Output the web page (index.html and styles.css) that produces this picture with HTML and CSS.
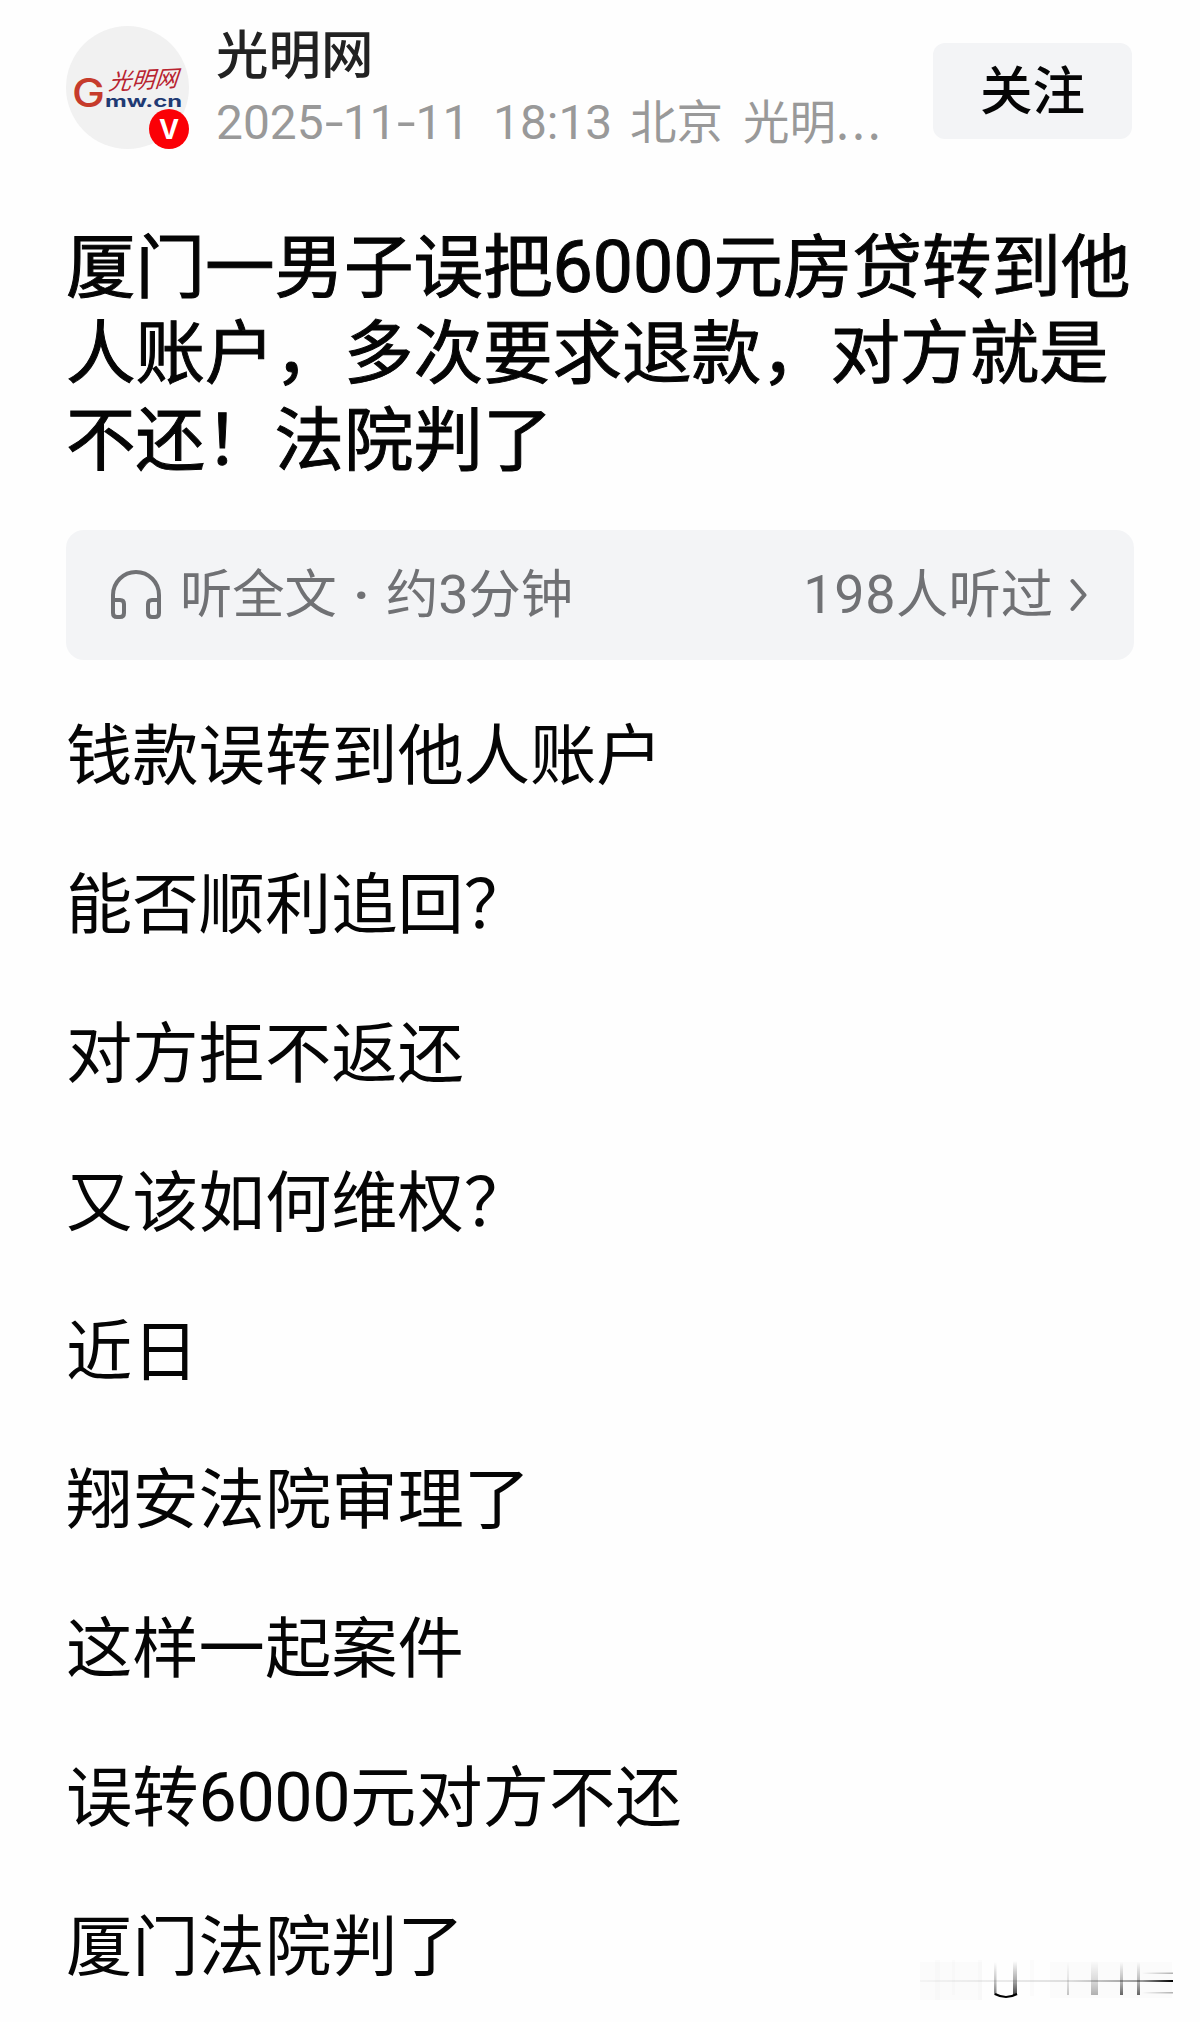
FILE: index.html
```html
<!DOCTYPE html>
<html lang="zh-CN">
<head>
  <meta charset="UTF-8">
  <title>光明网</title>
  <link rel="stylesheet" href="styles.css">
</head>
<body>
  <header class="author">
    <div class="avatar">
      <svg class="logo" viewBox="0 0 123 123">
        <text class="logo-g" x="6" y="81" textLength="33" lengthAdjust="spacingAndGlyphs">G</text>
        <text class="logo-cn" x="0" y="0" textLength="69" transform="translate(42 64) skewX(-8) rotate(-3)">光明网</text>
        <text class="logo-en" x="39" y="81" textLength="77" lengthAdjust="spacingAndGlyphs">mw.cn</text>
      </svg>
      <span class="badge">V</span>
    </div>
    <div class="info">
      <div class="name">光明网</div>
      <div class="meta"><span class="num date">2025<span class="dash">-</span>11<span class="dash">-</span>11</span><span class="num time">18:13</span><span class="city">北京</span><span>光明<span class="dots">...</span></span></div>
    </div>
    <button type="button" class="follow">关注</button>
  </header>

  <h1 class="title">厦门一男子误把<span class="num">6000</span>元房贷转到他<br>人账户，多次要求退款，对方就是<br>不还！法院判了</h1>

  <div class="listen">
    <svg class="headphone" viewBox="0 0 50 50" fill="none" stroke="#707174" stroke-width="4">
      <path d="M2 31 V25 A23 23 0 0 1 48 25 V31"/>
      <path d="M2 30 H9 Q13 30 13 34 V43 Q13 47 9 47 H6 Q2 47 2 43Z"/>
      <path d="M48 30 H41 Q37 30 37 34 V43 Q37 47 41 47 H44 Q48 47 48 43Z"/>
    </svg>
    <span class="listen-text">听全文<span class="dot">·</span>约<span class="num">3</span>分钟</span>
    <span class="listen-count"><span class="num">198</span>人听过</span>
    <svg class="arrow" viewBox="0 0 18 34" fill="none" stroke="#707174" stroke-width="4" stroke-linecap="round" stroke-linejoin="round">
      <path d="M2.500 3 L14.500 17 L2.500 31"/>
    </svg>
  </div>

  <article class="content">
    <p>钱款误转到他人账户</p>
    <p>能否顺利追回？</p>
    <p>对方拒不返还</p>
    <p>又该如何维权？</p>
    <p>近日</p>
    <p>翔安法院审理了</p>
    <p>这样一起案件</p>
    <p>误转<span class="num">6000</span>元对方不还</p>
    <p>厦门法院判了</p>
  </article>

  <!-- faded mark in the bottom corner -->
  <svg class="mark" viewBox="0 0 260 44">
    <defs>
      <linearGradient id="down" x1="0" y1="0" x2="0" y2="1">
        <stop offset="0" stop-color="#000" stop-opacity="0"/>
        <stop offset="0.6" stop-color="#000" stop-opacity="0.35"/>
        <stop offset="1" stop-color="#000" stop-opacity="0.75"/>
      </linearGradient>
      <linearGradient id="right" x1="0" y1="0" x2="1" y2="0">
        <stop offset="0" stop-color="#000" stop-opacity="0.03"/>
        <stop offset="0.6" stop-color="#000" stop-opacity="0.12"/>
        <stop offset="0.88" stop-color="#000" stop-opacity="0.4"/>
        <stop offset="1" stop-color="#000"/>
      </linearGradient>
      <linearGradient id="tail" x1="0" y1="0" x2="1" y2="0">
        <stop offset="0" stop-color="#000" stop-opacity="0"/>
        <stop offset="1" stop-color="#000" stop-opacity="0.3"/>
      </linearGradient>
    </defs>
    <g fill="#000" fill-opacity="0.01">
      <rect x="0" y="2" width="62" height="38"/>
      <rect x="15" y="0" width="5" height="40"/>
      <rect x="32" y="0" width="3" height="35"/>
      <rect x="58" y="0" width="4" height="40"/>
      <rect x="110" y="0" width="4" height="36"/>
      <rect x="130" y="2" width="122" height="36"/>
    </g>
    <g fill="url(#down)">
      <rect x="74" y="2" width="2.500" height="33" opacity="0.7"/>
      <rect x="93" y="1" width="4" height="34"/>
      <rect x="147" y="2" width="2" height="33" opacity="0.3"/>
      <rect x="171" y="1" width="7" height="34" opacity="0.4"/>
      <rect x="200" y="2" width="3" height="33" opacity="0.8"/>
      <rect x="217" y="2" width="3" height="33" opacity="0.8"/>
    </g>
    <path d="M75 34 Q86 40 97 34" fill="none" stroke="#000" stroke-width="2"/>
    <rect x="0" y="20" width="253" height="2" fill="url(#right)"/>
    <rect x="222" y="12.500" width="31" height="1.500" fill="url(#tail)"/>
    <rect x="222" y="32" width="31" height="1.500" fill="url(#tail)"/>
  </svg>
</body>
</html>
```
FILE: styles.css
```css
body {
  position: relative;
  width: 1200px;
  height: 2022px;
  margin: 0;
  padding: 26px 66px 0;
  box-sizing: border-box;
  overflow: hidden;
  background-color: #fefefe;
  color: #050505;
  font-family: "Noto Sans CJK SC", sans-serif;
}

.num {
  font-family: Roboto, "Noto Sans CJK SC", sans-serif;
  font-size: 1.03em;
  line-height: 1;
}

/* author row */
.author {
  display: flex;
  align-items: flex-start;
  height: 193px;
}

.avatar {
  position: relative;
  width: 123px;
  height: 123px;
  border-radius: 50%;
  background-color: #f1f1f1;
}

.logo {
  display: block;
  width: 123px;
  height: 123px;
}

.logo-g {
  font-family: Inter, sans-serif;
  font-size: 39px;
  font-weight: 500;
  fill: #c63b2b;
}

.logo-cn {
  font-family: "Noto Sans CJK SC", sans-serif;
  font-size: 23px;
  font-style: italic;
  fill: #b8232f;
}

.logo-en {
  font-family: Inter, sans-serif;
  font-size: 16px;
  font-weight: bold;
  fill: #1f3a73;
}

.badge {
  position: absolute;
  left: 83px;
  top: 83px;
  width: 40px;
  height: 40px;
  border-radius: 50%;
  background-color: #fb0006;
  color: #fff;
  font-family: Inter, sans-serif;
  font-size: 27px;
  font-weight: bold;
  line-height: 41px;
  text-align: center;
}

.info {
  flex: 1;
  margin-left: 27px;
}

.name {
  color: #222;
  font-size: 52.500px;
  font-weight: 500;
  line-height: 50px;
}

.meta {
  display: flex;
  align-items: baseline;
  margin-top: 13px;
  color: #999;
  font-size: 46.500px;
  line-height: 60px;
  white-space: nowrap;
}

.date {
  width: 277px;
}

.dash {
  display: inline-block;
  width: 13px;
  transform: scaleX(1.400);
  transform-origin: left;
  margin-left: 1px;
  margin-right: 5px;
}

.time {
  width: 137px;
}

.city {
  margin-right: 20px;
}

.dots {
  letter-spacing: 3px;
}

.follow {
  width: 199px;
  height: 96px;
  margin-top: 17px;
  margin-right: 2px;
  padding: 0 0 8px;
  border: none;
  border-radius: 12px;
  background-color: #f3f4f6;
  color: #050505;
  font-family: inherit;
  font-size: 52.500px;
  font-weight: 500;
  line-height: 88px;
}

.title {
  margin: 0;
  font-size: 69.500px;
  font-weight: 400;
  line-height: 86.300px;
  white-space: nowrap;
  -webkit-text-stroke: 1px #050505;
}

/* listen bar */
.listen {
  display: flex;
  align-items: center;
  height: 130px;
  margin-top: 52px;
  padding: 0 46px 0 45px;
  box-sizing: border-box;
  border-radius: 18px;
  background-color: #f3f4f6;
  color: #707174;
  font-size: 52.300px;
  line-height: 120px;
}

.headphone {
  width: 50px;
  height: 50px;
  margin-right: 19px;
}

.listen-text,
.listen-count {
  margin-top: -10px;
}

.listen-count {
  margin-left: auto;
}

.listen-count .num {
  letter-spacing: 0.700px;
}

.dot {
  display: inline-block;
  width: 49px;
  font-family: Roboto, sans-serif;
  font-weight: bold;
  line-height: 1;
  text-align: center;
}

.arrow {
  width: 18px;
  height: 34px;
  margin-left: 17px;
}

.content {
  margin-top: 16px;
  font-size: 66.300px;
  line-height: 148.900px;
}

.content .num {
  letter-spacing: -0.500px;
}

.content p {
  margin: 0;
}

.mark {
  position: absolute;
  left: 920px;
  top: 1960px;
  width: 260px;
  height: 44px;
}
```
